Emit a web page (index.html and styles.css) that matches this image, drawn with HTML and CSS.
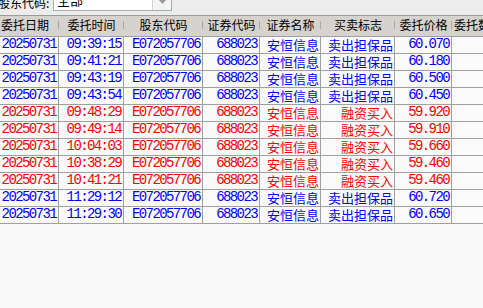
FILE: index.html
```html
<!DOCTYPE html>
<html lang="zh-CN">
<head>
<meta charset="utf-8">
<title>委托查询</title>
<link rel="stylesheet" href="styles.css">
</head>
<body>
<div class="toolbar">
  <span class="lbl">股东代码:</span>
  <div class="combo">
    <span class="combo-text">全部</span>
    <span class="combo-btn"><svg width="9" height="6" viewBox="0 0 9 6"><path d="M0.5 0.5 L8.5 0.5 L4.5 5 Z" fill="#9a9a9a"/></svg></span>
  </div>
</div>
<div class="grid">
  <div class="th">委托日期</div><div class="th">委托时间</div><div class="th">股东代码</div><div class="th">证券代码</div><div class="th">证券名称</div><div class="th">买卖标志</div><div class="th">委托价格</div><div class="th">委托数量</div>

  <div class="td n b">20250731</div><div class="td n b">09:39:15</div><div class="td n b">E072057706</div><div class="td n b">688023</div><div class="td c b">安恒信息</div><div class="td c b">卖出担保品</div><div class="td n b">60.070</div><div class="td"></div>
  <div class="td n b">20250731</div><div class="td n b">09:41:21</div><div class="td n b">E072057706</div><div class="td n b">688023</div><div class="td c b">安恒信息</div><div class="td c b">卖出担保品</div><div class="td n b">60.180</div><div class="td"></div>
  <div class="td n b">20250731</div><div class="td n b">09:43:19</div><div class="td n b">E072057706</div><div class="td n b">688023</div><div class="td c b">安恒信息</div><div class="td c b">卖出担保品</div><div class="td n b">60.500</div><div class="td"></div>
  <div class="td n b">20250731</div><div class="td n b">09:43:54</div><div class="td n b">E072057706</div><div class="td n b">688023</div><div class="td c b">安恒信息</div><div class="td c b">卖出担保品</div><div class="td n b">60.450</div><div class="td"></div>
  <div class="td n r">20250731</div><div class="td n r">09:48:29</div><div class="td n r">E072057706</div><div class="td n r">688023</div><div class="td c r">安恒信息</div><div class="td c r">融资买入</div><div class="td n r">59.920</div><div class="td"></div>
  <div class="td n r">20250731</div><div class="td n r">09:49:14</div><div class="td n r">E072057706</div><div class="td n r">688023</div><div class="td c r">安恒信息</div><div class="td c r">融资买入</div><div class="td n r">59.910</div><div class="td"></div>
  <div class="td n r">20250731</div><div class="td n r">10:04:03</div><div class="td n r">E072057706</div><div class="td n r">688023</div><div class="td c r">安恒信息</div><div class="td c r">融资买入</div><div class="td n r">59.660</div><div class="td"></div>
  <div class="td n r">20250731</div><div class="td n r">10:38:29</div><div class="td n r">E072057706</div><div class="td n r">688023</div><div class="td c r">安恒信息</div><div class="td c r">融资买入</div><div class="td n r">59.460</div><div class="td"></div>
  <div class="td n r">20250731</div><div class="td n r">10:41:21</div><div class="td n r">E072057706</div><div class="td n r">688023</div><div class="td c r">安恒信息</div><div class="td c r">融资买入</div><div class="td n r">59.460</div><div class="td"></div>
  <div class="td n b">20250731</div><div class="td n b">11:29:12</div><div class="td n b">E072057706</div><div class="td n b">688023</div><div class="td c b">安恒信息</div><div class="td c b">卖出担保品</div><div class="td n b">60.720</div><div class="td"></div>
  <div class="td n b">20250731</div><div class="td n b">11:29:30</div><div class="td n b">E072057706</div><div class="td n b">688023</div><div class="td c b">安恒信息</div><div class="td c b">卖出担保品</div><div class="td n b">60.650</div><div class="td"></div>
</div>
</body>
</html>
```

FILE: styles.css
```css
html, body {
  margin: 0;
  padding: 0;
  overflow: hidden;
  background: #f9f9f9;
  width: 483px;
  height: 308px;
}

.toolbar {
  height: 15px;
  box-sizing: border-box;
  padding-bottom: 4px;
  background: #ececec;
  overflow: hidden;
  display: flex;
  align-items: flex-end;
  font-family: "Noto Sans CJK SC", sans-serif;
  font-size: 12px;
  color: #000;
}

.lbl {
  width: 55px;
  margin-left: -2px;
  margin-bottom: 2px;
  line-height: 12px;
  white-space: nowrap;
  flex: none;
}

.combo {
  width: 119px;
  height: 20px;
  box-sizing: border-box;
  border: 1px solid #a5acb5;
  background: #fff;
  display: flex;
  flex: none;
}

.combo-text {
  flex: 1;
  padding-left: 3px;
  font-size: 13px;
  line-height: 16px;
}

.combo-btn {
  width: 19px;
  box-sizing: border-box;
  border-left: 1px solid #d0d0d0;
  background: #f4f4f4;
  display: flex;
  align-items: flex-end;
  justify-content: center;
  padding-bottom: 5px;
}

.grid {
  display: grid;
  grid-template-columns: 68px 65px 79px 57px 61px 74px 57px 52px;
  margin-left: -9px;
  width: max-content;
}

.th {
  position: relative;
  height: 22px;
  box-sizing: border-box;
  border-top: 1px solid #9a9a9a;
  border-bottom: 1px solid #a0a0a0;
  background: #d6d3ce;
  text-align: center;
  font-family: "Noto Sans CJK SC", sans-serif;
  font-size: 12px;
  line-height: 18px;
  color: #000;
  white-space: nowrap;
  overflow: hidden;
}

.th::after {
  content: "";
  position: absolute;
  right: 0;
  top: 5px;
  width: 1px;
  height: 8px;
  background: #a8a8a8;
  box-shadow: 1px 0 0 #f4f4f4;
}

.td {
  height: 17px;
  box-sizing: border-box;
  border-right: 1px solid #a0a0a0;
  border-bottom: 1px solid #a0a0a0;
  background: #fafafa;
  text-align: right;
  white-space: nowrap;
  overflow: hidden;
}

.n {
  font-family: "Liberation Mono", monospace;
  font-size: 14px;
  letter-spacing: -1.6px;
  line-height: 15px;
  padding-right: 2px;
}

.c {
  font-family: "Noto Sans CJK SC", sans-serif;
  font-size: 13px;
  line-height: 13px;
  padding-top: 1px;
  padding-right: 1px;
}

.b { color: #0000ff; }
.r { color: #ff0000; }
```
